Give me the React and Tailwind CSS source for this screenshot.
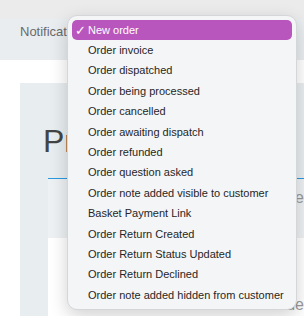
import React from "react";

const items = [
  "New order",
  "Order invoice",
  "Order dispatched",
  "Order being processed",
  "Order cancelled",
  "Order awaiting dispatch",
  "Order refunded",
  "Order question asked",
  "Order note added visible to customer",
  "Basket Payment Link",
  "Order Return Created",
  "Order Return Status Updated",
  "Order Return Declined",
  "Order note added hidden from customer",
];

function Menu() {
  return (
    <div className="absolute left-[67px] top-[15px] w-[230px] rounded-[10px] border border-[#d4d6d8] bg-[#f4f5f6] px-[4px] py-[4px] shadow-[0_6px_18px_rgba(0,0,0,0.18)]">
      {items.map((label, i) => (
        <div
          key={label}
          className={
            i === 0
              ? "flex h-[20.4px] items-center whitespace-nowrap rounded-[5px] bg-[#b956bd] text-white"
              : "flex h-[20.4px] items-center whitespace-nowrap text-[#262626]"
          }
        >
          <span className="w-[16px] pl-[3px] text-[13px] leading-none">{i === 0 ? "✓" : ""}</span>
          <span className="text-[11px] leading-none">{label}</span>
        </div>
      ))}
    </div>
  );
}

export default function App() {
  return (
    <div className="relative h-[316px] w-[304px] overflow-hidden bg-white font-['Liberation_Sans',Arial,sans-serif]">
      <div className="h-[19px] bg-[#ebebeb]" />
      <div className="h-[41px] bg-[#e9edf0] pl-[20px] pt-[3px] text-[13px] text-[#6a6a6a]">Notifications</div>
      <div className="ml-[20px] mt-[23px] h-[240px] bg-[#e8edf0] pl-[23px] pt-[42px]">
        <div className="text-[32px] leading-none text-[#444]">Preferences</div>
        <div className="ml-[5px] mt-[21px] border-t border-[#2a9ae0] bg-white">
          <div className="flex h-[59px] items-start justify-end bg-[#eef1f3] pt-[7px] text-[16px] text-[#999]">Type</div>
          <div className="flex h-[80px] items-start justify-end bg-white pt-[55px] text-[16px] text-[#999]">Value</div>
        </div>
      </div>
      <Menu />
    </div>
  );
}
